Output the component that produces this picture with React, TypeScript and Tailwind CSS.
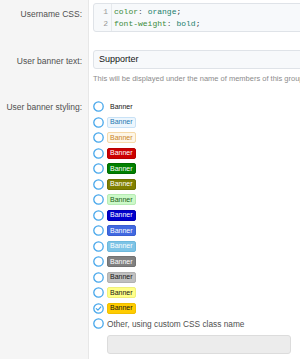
import React, { useState } from 'react';

// banner presets shown in the radio list
const banners: { id: string; cls: string }[] = [
  { id: 'plain', cls: 'border-transparent bg-transparent text-[#141414]' },
  { id: 'primary', cls: 'border-[#c9e2f6] bg-[#edf6fd] text-[#2577b1]' },
  { id: 'accent', cls: 'border-[#f5d9a8] bg-[#fef6e7] text-[#c9852a]' },
  { id: 'red', cls: 'border-[#b80000] bg-[#cc0000] text-white' },
  { id: 'green', cls: 'border-[#006b00] bg-[#008000] text-white' },
  { id: 'olive', cls: 'border-[#6f6f00] bg-[#808000] text-white' },
  { id: 'lightGreen', cls: 'border-[#b7ebb4] bg-[#ccf9c8] text-[#1b5e20]' },
  { id: 'blue', cls: 'border-[#0000b3] bg-[#0000cc] text-white' },
  { id: 'royalBlue', cls: 'border-[#3a5ed0] bg-[#4169e1] text-white' },
  { id: 'skyBlue', cls: 'border-[#6db8dc] bg-[#7ec4e6] text-white' },
  { id: 'gray', cls: 'border-[#727272] bg-[#808080] text-white' },
  { id: 'silver', cls: 'border-[#b0b0b0] bg-[#c0c0c0] text-[#141414]' },
  { id: 'yellow', cls: 'border-[#f0f07a] bg-[#ffff88] text-[#141414]' },
  { id: 'orange', cls: 'border-[#f0bf00] bg-[#ffcc00] text-[#141414]' },
];

const Radio = ({ checked }: { checked: boolean }) =>
  checked ? (
    <svg width="11" height="11" viewBox="0 0 11 11" className="shrink-0">
      <circle cx="5.5" cy="5.5" r="4.7" fill="white" stroke="#47a7eb" strokeWidth="1.3" />
      <path d="M3.3 5.6 L4.9 7.1 L7.8 4" fill="none" stroke="#47a7eb" strokeWidth="1.2" strokeLinecap="round" strokeLinejoin="round" />
    </svg>
  ) : (
    <svg width="11" height="11" viewBox="0 0 11 11" className="shrink-0">
      <circle cx="5.5" cy="5.5" r="4.7" fill="white" stroke="#47a7eb" strokeWidth="1.3" />
    </svg>
  );

const Label = ({ children, pt }: { children: React.ReactNode; pt: string }) => (
  <div className={`w-[89px] shrink-0 bg-[#f5f5f5] border-r border-[#e7e7e7] pr-[6px] text-right text-[8.5px] leading-[12px] text-[#505050] ${pt}`}>
    {children}
  </div>
);

export default function App() {
  const [selected, setSelected] = useState('orange');

  return (
    <div className="w-[300px] h-[359px] overflow-hidden bg-white flex flex-col font-['Liberation_Sans',Arial,sans-serif]">
      {/* Username CSS */}
      <div className="flex">
        <Label pt="pt-[8px]">Username CSS:</Label>
        <div className="flex-1 pt-[3px] pl-[4px] pb-[18px]">
          <div className="w-[260px] h-[29px] flex rounded-[3px] border border-[#dfe3e8] bg-[#f7f9fb] font-['Liberation_Mono',monospace] text-[8px] leading-[12px]">
            <div className="w-[18px] pt-[2px] pr-[3px] text-right text-[#999] border-r border-[#e6e9ec]">
              <div>1</div>
              <div>2</div>
            </div>
            <div className="pt-[2px] pl-[2px] whitespace-pre">
              <div>
                <span className="text-[#3c8b3c]">color</span>
                <span className="text-[#555]">: </span>
                <span className="text-[#22806d]">orange</span>
                <span className="text-[#333]">;</span>
              </div>
              <div>
                <span className="text-[#3c8b3c]">font-weight</span>
                <span className="text-[#555]">: </span>
                <span className="text-[#22806d]">bold</span>
                <span className="text-[#333]">;</span>
              </div>
            </div>
          </div>
        </div>
      </div>

      {/* User banner text */}
      <div className="flex">
        <Label pt="pt-[5px]">User banner text:</Label>
        <div className="flex-1 min-w-0 pl-[4px] pb-[15px]">
          <div className="w-[260px] h-[19px] flex items-center rounded-[3px] border border-[#dfe3e8] bg-[#f7f9fb] pl-[5px] text-[9px] text-[#141414]">
            Supporter
          </div>
          <div className="mt-[5px] whitespace-nowrap text-[7.5px] leading-[10px] text-[#8c8c8c]">
            This will be displayed under the name of members of this group.
          </div>
        </div>
      </div>

      {/* User banner styling */}
      <div className="flex flex-1">
        <Label pt="pt-[2px]">User banner styling:</Label>
        <div className="flex-1 pl-[4px]">
          {banners.map(b => (
            <div key={b.id} className="h-[15.5px] flex items-center gap-[3px] cursor-pointer" onClick={() => setSelected(b.id)}>
              <Radio checked={selected === b.id} />
              <span className={`h-[11px] px-[2px] flex items-center rounded-[2px] border text-[7px] ${b.cls}`}>Banner</span>
            </div>
          ))}
          <div className="h-[15.5px] flex items-center gap-[3px] cursor-pointer" onClick={() => setSelected('custom')}>
            <Radio checked={selected === 'custom'} />
            <span className="text-[8.3px] text-[#505050]">Other, using custom CSS class name</span>
          </div>
          <div className="ml-[14px] mt-[3px] w-[184px] h-[19px] rounded-[3px] border border-[#dcdcdc] bg-[#ececec]" />
        </div>
      </div>
    </div>
  );
}
